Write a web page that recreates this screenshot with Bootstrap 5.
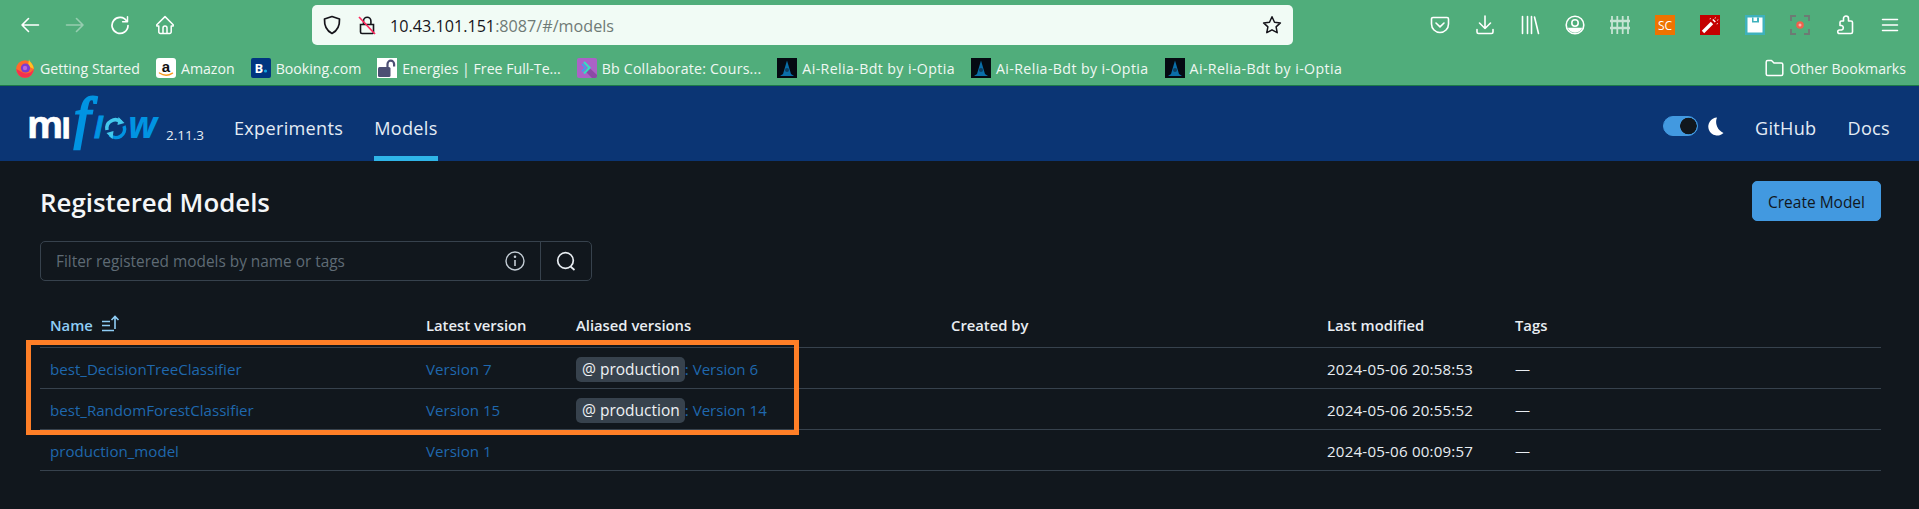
<!DOCTYPE html>
<html>
<head>
  <meta charset="utf-8">
  <title>MLflow</title>
  <link rel="stylesheet" href="https://cdn.jsdelivr.net/npm/bootstrap@5.3.0/dist/css/bootstrap.min.css">
  <style>
    html, body {
      height: 509px;
      overflow: hidden;
    }
    body {
      background-color: #11171d;
      font-family: "Open Sans", "Noto Sans", sans-serif;
      color: #e8edf2;
    }

    /* browser chrome */
    .chrome-top {
      height: 50px;
      padding-left: 7.5px;
      background-color: #50ad7b;
    }
    .tool-cell {
      width: 45px;
      height: 50px;
      flex: none;
    }
    .tool-dim {
      opacity: .4;
    }
    .url-box {
      width: 981px;
      height: 40px;
      margin-left: 124.5px;
      margin-right: 124.5px;
      padding: 0 11px;
      flex: none;
      border-radius: 5px;
      background-color: #f1fbf5;
    }
    .url-lock {
      margin-left: 17px;
      margin-right: 14px;
    }
    .url-text {
      padding-top: 2px;
      font-size: 16.16px;
      color: #6f7a76;
    }
    .url-host {
      color: #15141a;
    }
    .bm-bar {
      height: 36px;
      padding: 2px 13px 0 15px;
      background-color: #50ad7b;
      border-bottom: 1px solid #1c7a48;
      font-size: 14.15px;
      color: #f0f8f3;
    }
    .bm-item {
      margin-right: 16px;
      white-space: nowrap;
    }
    .bm-item svg {
      margin-right: 5px;
      flex: none;
    }
    .bm-label {
      padding-top: 1px;
    }
    .bm-wide {
      letter-spacing: .4px;
    }
    .bm-mid {
      letter-spacing: .2px;
    }

    /* mlflow header */
    .ml-nav {
      height: 75px;
      padding: 0 29px 0 26px;
      background-color: #0b3574;
      flex-wrap: nowrap;
    }
    .ml-version {
      margin: 24px 30px 0 2px;
      font-size: 13.5px;
      color: #e8edf2;
    }
    .ml-nav .navbar-nav .ml-link {
      height: 75px;
      margin-right: 31px;
      padding: 15px 0 0;
      border-bottom: 5px solid transparent;
      font-size: 18.13px;
      letter-spacing: .3px;
      color: #e4ecf5;
    }
    .ml-nav .navbar-nav .ml-link.active {
      border-bottom-color: #2fb5e8;
    }
    .ml-nav .navbar-nav .ml-link-end {
      margin-right: 0;
      margin-left: 31px;
    }
    .theme-switch {
      min-height: 0;
      margin: 5px 10px 0 0;
      padding: 0;
    }
    .theme-moon {
      margin-top: 5px;
    }
    .theme-switch .form-check-input {
      width: 35px;
      height: 20px;
      margin: 0;
      display: block;
      float: none;
      border: 1px solid #4299e0;
      background-color: #4299e0;
      background-image: radial-gradient(circle at 24.5px 9px, #11171d 8px, transparent 8.6px);
    }

    /* page */
    .page-body {
      padding: 20px 38px 0 40px;
    }
    .page-title {
      margin: 6px 0 0;
      font-size: 25.86px;
      font-weight: 600;
      color: #f4f6f8;
    }
    .btn-create {
      width: 129px;
      height: 40px;
      padding: 3px 0 0;
      font-size: 15.49px;
      border-radius: 5px;
      --bs-btn-bg: #4299e0;
      --bs-btn-border-color: #4299e0;
      --bs-btn-color: #11171d;
      --bs-btn-hover-bg: #4299e0;
      --bs-btn-hover-color: #11171d;
    }
    .search-group {
      width: 552px;
      height: 40px;
      margin-top: 20px;
      margin-bottom: 25px;
    }
    .search-input {
      height: 40px;
      padding: 1px 40px 0 15px;
      font-size: 15.38px;
      color: #e8edf2;
      background-color: transparent;
      border-color: #37424d;
      border-radius: 5px 0 0 5px;
    }
    .search-input::placeholder {
      color: #5f6b75;
    }
    .search-info {
      top: 10px;
      right: 67px;
      z-index: 5;
    }
    .search-btn {
      width: 52px;
      padding: 0;
      border-color: #37424d;
      border-radius: 0 5px 5px 0;
      background-color: transparent;
    }
    .table-wrap {
      width: 1841px;
    }
    .model-table {
      table-layout: fixed;
      width: 100%;
      margin: 0;
      font-size: 15.1px;
      --bs-table-bg: transparent;
      --bs-table-color: #e8edf2;
      --bs-table-border-color: #37424d;
      --bs-border-width: 1px;
    }
    .model-table > * > tr > * {
      height: 41px;
      padding: 3px 0 0 10px;
      vertical-align: middle;
      white-space: nowrap;
    }
    .model-table > thead > tr > th {
      padding: 0 0 2px 10px;
      font-size: 14.8px;
      font-weight: 600;
    }
    .model-table a {
      color: #1f68ad;
      text-decoration: none;
    }
    .model-table > thead > tr > .th-sorted {
      color: #8fcdf5;
    }
    .c-name { width: 376px; }
    .c-latest { width: 150px; }
    .c-alias { width: 375px; }
    .c-created { width: 376px; }
    .c-modified { width: 188px; }
    .td-time {
      letter-spacing: .2px;
    }
    .alias-tag {
      display: inline-block;
      height: 25px;
      padding: 0 5px 0 6px;
      font-size: 15.5px;
      line-height: 24px;
      border-radius: 5px;
      background-color: #37424d;
      color: #eef1f4;
    }
    .mark-box {
      left: -14px;
      top: 34px;
      width: 773px;
      height: 95px;
      border: 5px solid #ff7f27;
      pointer-events: none;
    }
  </style>
</head>
<body>

<!-- 浏览器工具栏 -->
<div class="chrome-top d-flex align-items-center">
  <div class="tool-cell d-flex align-items-center justify-content-center">
    <svg width="20" height="20" viewBox="0 0 20 20" fill="none" stroke="#fff" stroke-width="1.6" stroke-linecap="round" stroke-linejoin="round"><path d="M18.5 10H2M8.5 3.5 2 10l6.5 6.5"/></svg>
  </div>
  <div class="tool-cell d-flex align-items-center justify-content-center tool-dim">
    <svg width="20" height="20" viewBox="0 0 20 20" fill="none" stroke="#fff" stroke-width="1.6" stroke-linecap="round" stroke-linejoin="round"><path d="M1.5 10H18M11.5 3.5 18 10l-6.5 6.5"/></svg>
  </div>
  <div class="tool-cell d-flex align-items-center justify-content-center">
    <svg width="20" height="20" viewBox="0 0 20 20" fill="none" stroke="#fff" stroke-width="1.7" stroke-linecap="round" stroke-linejoin="round"><path d="M16.8 6.2A8 8 0 1 0 18 10.5"/><path d="M17.5 1.8v4.9h-4.9" stroke-width="1.5"/></svg>
  </div>
  <div class="tool-cell d-flex align-items-center justify-content-center">
    <svg width="20" height="20" viewBox="0 0 20 20" fill="none" stroke="#fff" stroke-width="1.5" stroke-linejoin="round"><path d="M10 1.6 1.8 9.8v1.2h2v6a1.5 1.5 0 0 0 1.5 1.5h9.4a1.5 1.5 0 0 0 1.5-1.5v-6h2V9.8z"/><path d="M8 18.5V13a2 2 0 0 1 4 0v5.500"/></svg>
  </div>

  <div class="url-box d-flex align-items-center">
    <svg width="18" height="20" viewBox="0 0 18 20" fill="none" stroke="#15141a" stroke-width="1.7" stroke-linejoin="round"><path d="M9 1.500 16.500 4c.3 7-1.500 11.500-7.500 14.500C3 15.500 1.200 11 1.500 4z"/></svg>
    <svg class="url-lock" width="18" height="20" viewBox="0 0 18 20" fill="none"><path d="M2.500 9.500h13V17a1.500 1.500 0 0 1-1.500 1.500H4A1.500 1.500 0 0 1 2.500 17zM5.500 9.500V6a3.700 3.700 0 0 1 7.400 0v3.500" stroke="#15141a" stroke-width="1.600"/><path d="M1 2l16 17" stroke="#ff2a5f" stroke-width="1.700"/></svg>
    <span class="url-text flex-grow-1"><span class="url-host">10.43.101.151</span>:8087/#/models</span>
    <svg width="20" height="20" viewBox="0 0 20 20" fill="none" stroke="#15141a" stroke-width="1.500" stroke-linejoin="round"><path d="m10 1.800 2.500 5.400 5.900.7-4.300 4 1.100 5.800L10 14.800l-5.200 2.900 1.100-5.800-4.300-4 5.900-.7z"/></svg>
  </div>

  <div class="tool-cell d-flex align-items-center justify-content-center">
    <svg width="20" height="20" viewBox="0 0 20 20" fill="none" stroke="#fff" stroke-width="1.600" stroke-linecap="round" stroke-linejoin="round"><path d="M3 2.500h14A1.500 1.500 0 0 1 18.500 4v5a8.500 8.500 0 0 1-17 0V4A1.500 1.500 0 0 1 3 2.500z"/><path d="m6 8 4 3.800L14 8"/></svg>
  </div>
  <div class="tool-cell d-flex align-items-center justify-content-center">
    <svg width="20" height="20" viewBox="0 0 20 20" fill="none" stroke="#fff" stroke-width="1.600" stroke-linecap="round" stroke-linejoin="round"><path d="M10 1v12.500M4.500 8l5.500 5.500L15.500 8"/><path d="M2 14.500V17a1.500 1.500 0 0 0 1.500 1.500h13A1.500 1.500 0 0 0 18 17v-2.500"/></svg>
  </div>
  <div class="tool-cell d-flex align-items-center justify-content-center">
    <svg width="20" height="20" viewBox="0 0 20 20" fill="none" stroke="#fff" stroke-width="1.600" stroke-linecap="round"><path d="M2.500 1.500v17M7.500 1.500v17M11.500 1.500v17M14.500 2l4 16.500"/></svg>
  </div>
  <div class="tool-cell d-flex align-items-center justify-content-center">
    <svg width="20" height="20" viewBox="0 0 20 20" fill="none" stroke="#fff" stroke-width="1.600"><circle cx="10" cy="10" r="8.800"/><circle cx="10" cy="8" r="3.200"/><path d="M4 13.500h12a6.500 5.500 0 0 1-12 0z" fill="#fff"/></svg>
  </div>
  <div class="tool-cell d-flex align-items-center justify-content-center">
    <svg width="20" height="20" viewBox="0 0 20 20" fill="none" stroke="#d3ebdd" stroke-width="1.800" opacity=".9"><path d="M2 1v18M7.300 1v18M12.700 1v18M18 1v18"/><path d="M0 6h20M0 13h20" stroke-width="2.400"/></svg>
  </div>
  <div class="tool-cell d-flex align-items-center justify-content-center">
    <svg width="20" height="20" viewBox="0 0 20 20"><rect width="20" height="20" fill="#ee7300"/><text x="10" y="14.500" text-anchor="middle" font-family="Open Sans" font-size="12" fill="#fff">SC</text></svg>
  </div>
  <div class="tool-cell d-flex align-items-center justify-content-center">
    <svg width="20" height="20" viewBox="0 0 20 20"><rect width="20" height="20" fill="#c40000"/><path d="m3 17 9-9" stroke="#fff" stroke-width="3.400"/><path d="m12.800 4.500 2.500 2.500M15 2.800l.5.500M17.500 4.800l.5.500M10 3.500l.5.500M17 8.500l.5.500" stroke="#fff" stroke-width="1.500"/></svg>
  </div>
  <div class="tool-cell d-flex align-items-center justify-content-center">
    <svg width="20" height="20" viewBox="0 0 20 20"><rect width="20" height="20" fill="#3eb1bc"/><path d="M2.500 2.500h15v15h-15z" fill="#fff"/><path d="M7 2.500h7v5H7z" fill="#3eb1bc"/><path d="M8.500 2.500h3.500v3.500H8.500z" fill="#fff"/></svg>
  </div>
  <div class="tool-cell d-flex align-items-center justify-content-center">
    <svg width="20" height="20" viewBox="0 0 20 20" fill="none"><path d="M1 6V1h5M14 1h5v5M19 14v5h-5M6 19H1v-5" stroke="#6d7a74" stroke-width="1.900"/><circle cx="10" cy="10" r="3.800" fill="#f0604d"/><circle cx="10" cy="10" r="1.500" fill="#f7b5a9"/></svg>
  </div>
  <div class="tool-cell d-flex align-items-center justify-content-center">
    <svg width="20" height="20" viewBox="0 0 20 20" fill="none" stroke="#fff" stroke-width="1.600" stroke-linejoin="round"><path d="M11 1a2.500 2.500 0 0 0-2.500 2.500V6H6.500a1.500 1.500 0 0 0-1.500 1.500v3h1.500a2.300 2.300 0 0 1 0 4.500H4.500a1.500 1.500 0 0 0 0 3.500H16a1.500 1.500 0 0 0 1.500-1.500V7.500A1.500 1.500 0 0 0 16 6h-2.500V3.500A2.500 2.500 0 0 0 11 1z"/></svg>
  </div>
  <div class="tool-cell d-flex align-items-center justify-content-center">
    <svg width="20" height="20" viewBox="0 0 20 20" fill="none" stroke="#fff" stroke-width="1.500" stroke-linecap="round"><path d="M2.500 4.500h15M2.500 10h15M2.500 15.500h15"/></svg>
  </div>
</div>

<!-- 书签栏 -->
<div class="bm-bar d-flex align-items-center">
  <div class="bm-item d-flex align-items-center">
    <svg width="20" height="20" viewBox="0 0 20 20"><circle cx="10" cy="11" r="8.800" fill="#ff6a2b"/><path d="M14 1.200c.5 3 4.500 4.500 4.700 9.800L13 8z" fill="#ffc21f"/><path d="M1.300 11a8.700 8.700 0 0 0 17.400 0c-2 4-7 5.500-11 3.500C5 13 3 12 1.300 11z" fill="#f5304f"/><circle cx="10.500" cy="10" r="4.600" fill="#7a3bd1"/><circle cx="10" cy="10" r="2.200" fill="#b667e0"/></svg>
    <span class="bm-label">Getting Started</span>
  </div>
  <div class="bm-item d-flex align-items-center">
    <svg width="20" height="20" viewBox="0 0 20 20"><rect width="20" height="20" rx="3" fill="#fff"/><text x="10" y="13.800" text-anchor="middle" font-family="Liberation Sans" font-weight="700" font-size="15" fill="#111">a</text><path d="M3.500 15c4 2.800 9 2.800 13 .2" fill="none" stroke="#f79a1e" stroke-width="1.400" stroke-linecap="round"/></svg>
    <span class="bm-label">Amazon</span>
  </div>
  <div class="bm-item d-flex align-items-center">
    <svg width="20" height="20" viewBox="0 0 20 20"><rect width="20" height="20" rx="2" fill="#003580"/><text x="3.500" y="14.500" font-family="Open Sans" font-weight="700" font-size="13" fill="#fff">B</text><circle cx="14.500" cy="13" r="1.600" fill="#12a5e0"/></svg>
    <span class="bm-label">Booking.com</span>
  </div>
  <div class="bm-item d-flex align-items-center">
    <svg width="20" height="20" viewBox="0 0 20 20"><rect width="20" height="20" fill="#fff"/><rect x="1" y="9" width="12.500" height="10" rx="1.500" fill="#4c4f73"/><path d="M10.500 9V6a3.300 3.300 0 0 1 6.600 0v2.500" fill="none" stroke="#4c4f73" stroke-width="2.200"/></svg>
    <span class="bm-label">Energies | Free Full-Te...</span>
  </div>
  <div class="bm-item d-flex align-items-center">
    <svg width="20" height="20" viewBox="0 0 20 20"><rect width="20" height="20" rx="2" fill="#ab62c6"/><path d="m8 13 4-3.500L20 17v1a2 2 0 0 1-2 2h-3z" fill="#8b4aa5"/><path d="m7 4 5.500 5.700L7 15.500" fill="none" stroke="#35e0c0" stroke-width="2.200"/><path d="m5 6 3.500 3.700L5 13.500" fill="none" stroke="#3fa0f0" stroke-width="1.800"/></svg>
    <span class="bm-label bm-mid">Bb Collaborate: Cours...</span>
  </div>
  <div class="bm-item d-flex align-items-center">
    <svg width="20" height="20" viewBox="0 0 20 20"><rect width="20" height="20" fill="#050a12"/><path d="M10 2.500 14 16l3 2H3l3-2z" fill="#0a6ea8"/><circle cx="10" cy="12" r="2" fill="#0b3f63"/></svg>
    <span class="bm-label bm-wide">Ai-Relia-Bdt by i-Optia</span>
  </div>
  <div class="bm-item d-flex align-items-center">
    <svg width="20" height="20" viewBox="0 0 20 20"><rect width="20" height="20" fill="#050a12"/><path d="M10 2.500 14 16l3 2H3l3-2z" fill="#0a6ea8"/><circle cx="10" cy="12" r="2" fill="#0b3f63"/></svg>
    <span class="bm-label bm-wide">Ai-Relia-Bdt by i-Optia</span>
  </div>
  <div class="bm-item d-flex align-items-center">
    <svg width="20" height="20" viewBox="0 0 20 20"><rect width="20" height="20" fill="#050a12"/><path d="M10 2.500 14 16l3 2H3l3-2z" fill="#0a6ea8"/><circle cx="10" cy="12" r="2" fill="#0b3f63"/></svg>
    <span class="bm-label bm-wide">Ai-Relia-Bdt by i-Optia</span>
  </div>
  <div class="bm-item d-flex align-items-center ms-auto me-0">
    <svg width="19" height="20" viewBox="1 0 18 20" fill="none" stroke="#fff" stroke-width="1.500" stroke-linejoin="round"><path d="M1.700 4a1.500 1.500 0 0 1 1.500-1.500H7L9.500 5h7.300a1.500 1.500 0 0 1 1.500 1.500V16a1.500 1.500 0 0 1-1.500 1.500H3.200A1.500 1.500 0 0 1 1.700 16z"/></svg>
    <span class="bm-label">Other Bookmarks</span>
  </div>
</div>

<!-- mlflow 导航 -->
<nav class="navbar navbar-expand ml-nav align-items-stretch">
  <a class="d-flex align-items-center text-decoration-none" href="#">
    <svg width="138" height="80" viewBox="-3 -15 138 80">
      <text x="-2" y="39" font-family="Open Sans" font-weight="700" font-size="37" fill="#fff" stroke="#fff" stroke-width=".5">m</text>
      <text x="33" y="39" font-family="Open Sans" font-weight="700" font-size="27" fill="#fff" stroke="#fff" stroke-width="1.400">l</text>
      <text x="45" y="38" font-family="Liberation Serif" font-style="italic" font-size="58" fill="#0194e2" stroke="#0194e2" stroke-width="2.500">f</text>
      <text x="65" y="39" font-family="Open Sans" font-style="italic" font-weight="700" font-size="29" fill="#0194e2" stroke="#0194e2" stroke-width=".8">l</text>
      <path d="M78 31a8.500 8.500 0 0 1 14-8" fill="none" stroke="#43c9ed" stroke-width="3.500"/>
      <path d="M95 27a8.500 8.500 0 0 1-14 9" fill="none" stroke="#0194e2" stroke-width="3.500"/>
      <path d="m89.500 18 6 6-7 2zM83.500 40l-6-6 7-2z" fill="#43c9ed"/>
      <text x="99" y="39" font-family="Open Sans" font-style="italic" font-weight="700" font-size="37" fill="#0194e2">w</text>
    </svg>
    <span class="ml-version">2.11.3</span>
  </a>
  <div class="navbar-nav flex-row">
    <a class="nav-link ml-link d-flex align-items-center" href="#">Experiments</a>
    <a class="nav-link ml-link active d-flex align-items-center" href="#">Models</a>
  </div>
  <div class="navbar-nav flex-row ms-auto align-items-center">
    <div class="form-check form-switch theme-switch">
      <input class="form-check-input" type="checkbox" role="switch" checked>
    </div>
    <svg class="theme-moon" width="16" height="19" viewBox="0 0 16 19"><path d="M9 .5a9 9 0 1 0 6.500 15.500A12 12 0 0 1 9 .5z" fill="#fff"/></svg>
    <a class="nav-link ml-link ml-link-end d-flex align-items-center" href="#">GitHub</a>
    <a class="nav-link ml-link ml-link-end d-flex align-items-center" href="#">Docs</a>
  </div>
</nav>

<!-- 模型列表 -->
<main class="page-body">
  <div class="d-flex justify-content-between align-items-start">
    <h2 class="page-title">Registered Models</h2>
    <button type="button" class="btn btn-create">Create Model</button>
  </div>

  <div class="input-group search-group position-relative">
    <input type="text" class="form-control search-input" placeholder="Filter registered models by name or tags">
    <svg class="search-info position-absolute" width="20" height="20" viewBox="0 0 20 20" fill="none" stroke="#c3ccd4" stroke-width="1.400"><circle cx="10" cy="10" r="9"/><path d="M10 9v6" stroke-width="1.600"/><circle cx="10" cy="5.800" r=".6" fill="#c3ccd4"/></svg>
    <button type="button" class="btn search-btn d-flex align-items-center justify-content-center">
      <svg width="20" height="20" viewBox="0 0 20 20" fill="none" stroke="#e8edf2" stroke-width="1.700"><circle cx="9.500" cy="9.500" r="7.800"/><path d="m14.500 15.500 4 3.500"/></svg>
    </button>
  </div>

  <div class="table-wrap position-relative">
    <table class="table model-table">
      <thead>
        <tr>
          <th class="c-name th-sorted">Name
            <svg class="ms-1 align-text-top" width="19" height="17" viewBox="0 0 19 17" fill="none" stroke="#8fcdf5" stroke-width="1.600"><path d="M1 6.500h8M1 10.500h8M1 15.500h12M14 14V2M10.500 5 14 1.500 17.500 5"/></svg>
          </th>
          <th class="c-latest">Latest version</th>
          <th class="c-alias">Aliased versions</th>
          <th class="c-created">Created by</th>
          <th class="c-modified">Last modified</th>
          <th>Tags</th>
        </tr>
      </thead>
      <tbody>
        <tr>
          <td><a href="#">best_DecisionTreeClassifier</a></td>
          <td><a href="#">Version 7</a></td>
          <td><span class="alias-tag">@ production</span><a href="#">: Version 6</a></td>
          <td></td>
          <td class="td-time">2024-05-06 20:58:53</td>
          <td>—</td>
        </tr>
        <tr>
          <td><a href="#">best_RandomForestClassifier</a></td>
          <td><a href="#">Version 15</a></td>
          <td><span class="alias-tag">@ production</span><a href="#">: Version 14</a></td>
          <td></td>
          <td class="td-time">2024-05-06 20:55:52</td>
          <td>—</td>
        </tr>
        <tr>
          <td><a href="#">production_model</a></td>
          <td><a href="#">Version 1</a></td>
          <td></td>
          <td></td>
          <td class="td-time">2024-05-06 00:09:57</td>
          <td>—</td>
        </tr>
      </tbody>
    </table>
    <div class="mark-box position-absolute"></div>
  </div>
</main>

</body>
</html>
